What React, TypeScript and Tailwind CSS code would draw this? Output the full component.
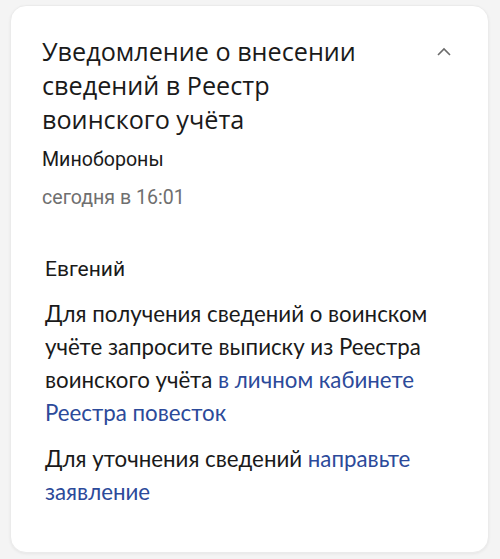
import React from "react";

export default function App() {
  return (
    <div className="w-[500px] h-[559px] bg-[#f4f4f4] pt-[5px] pl-[10px] overflow-hidden">
      <div className="w-[479px] h-[548px] bg-white rounded-[16px] border border-[#ebebeb] shadow-[0_1px_3px_rgba(0,0,0,0.06)] pl-[31px] pr-[30px] pt-[28px]">
        <div className="flex justify-between">
          <h1 className="text-[25.2px] leading-[34px] text-[#1a1a1a] font-['Open_Sans',sans-serif] w-[360px]">
            Уведомление о внесении сведений в Реестр воинского учёта
          </h1>
          <svg width="16" height="12" viewBox="0 0 16 12" className="mt-[12px] mr-[6px]">
            <path d="M2 9 L8 3 L14 9" fill="none" stroke="#6b6b6b" strokeWidth="1.6" />
          </svg>
        </div>
        <div className="mt-[11px] text-[19.6px] leading-[26px] text-[#1a1a1a] font-['Roboto',sans-serif]">Минобороны</div>
        <div className="mt-[12px] text-[19.6px] leading-[26px] text-[#6f6f6f] font-['Roboto',sans-serif]">сегодня в 16:01</div>
        <div className="mt-[44px] pl-[3px] text-[#1a1a1a]">
          <div className="text-[21px] leading-[28px] font-['Roboto',sans-serif]">Евгений</div>
          <p className="mt-[14px] whitespace-nowrap text-[22.3px] leading-[33px] font-['Lato',sans-serif]">
            Для получения сведений о воинском
            <br />
            учёте запросите выписку из Реестра
            <br />
            воинского учёта <span className="text-[#2c4a9a]">в личном кабинете</span>
            <br />
            <span className="text-[#2c4a9a]">Реестра повесток</span>
          </p>
          <p className="mt-[13px] whitespace-nowrap text-[22.3px] leading-[33px] font-['Lato',sans-serif]">
            Для уточнения сведений <span className="text-[#2c4a9a]">направьте</span>
            <br />
            <span className="text-[#2c4a9a]">заявление</span>
          </p>
        </div>
      </div>
    </div>
  );
}
